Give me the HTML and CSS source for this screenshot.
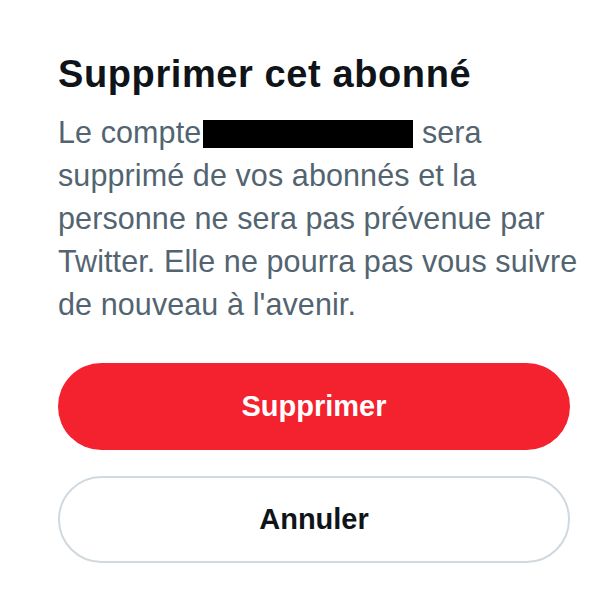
FILE: index.html
```html
<!DOCTYPE html>
<html lang="fr">
<head>
  <meta charset="UTF-8">
  <title>Supprimer cet abonné</title>
  <link rel="stylesheet" href="styles.css">
</head>
<body>

<div class="dialog">
  <h1 class="dialog-title">Supprimer cet abonné</h1>
  <p class="dialog-text">Le compte<span class="redacted"></span> sera<br>
    supprimé de vos abonnés et la<br>
    personne ne sera pas prévenue par<br>
    Twitter. Elle ne pourra pas vous suivre<br>
    de nouveau à l'avenir.</p>

  <div class="actions">
    <button class="btn btn-danger">Supprimer</button>
    <button class="btn btn-outline">Annuler</button>
  </div>
</div>

</body>
</html>
```

FILE: styles.css
```css
body {
  margin: 0;
  padding: 0;
  background-color: #ffffff;
  font-family: "Liberation Sans", Arial, sans-serif;
}

.dialog {
  width: 550px;
  padding: 50px 8px 0 58px;
}

.dialog-title {
  margin: 0;
  font-size: 38px;
  line-height: 48px;
  font-weight: bold;
  letter-spacing: 0.6px;
  color: #0f1419;
}

.dialog-text {
  margin: 13px 0 0 0;
  font-size: 30.5px;
  line-height: 43px;
  letter-spacing: 0.1px;
  white-space: nowrap;
  color: #536471;
}

.redacted {
  display: inline-block;
  width: 210px;
  height: 28px;
  margin-left: 2px;
  background-color: #000000;
  vertical-align: -5px;
}

.actions {
  display: flex;
  flex-direction: column;
  gap: 26px;
  width: 512px;
  margin-top: 37px;
}

.btn {
  height: 87px;
  border-radius: 44px;
  font-family: "Liberation Sans", Arial, sans-serif;
  font-size: 29px;
  font-weight: bold;
  cursor: pointer;
}

.btn-danger {
  background-color: #f4212e;
  color: #ffffff;
  border: none;
}

.btn-outline {
  background-color: #ffffff;
  color: #0f1419;
  border: 2px solid #cfd9de;
}
```
